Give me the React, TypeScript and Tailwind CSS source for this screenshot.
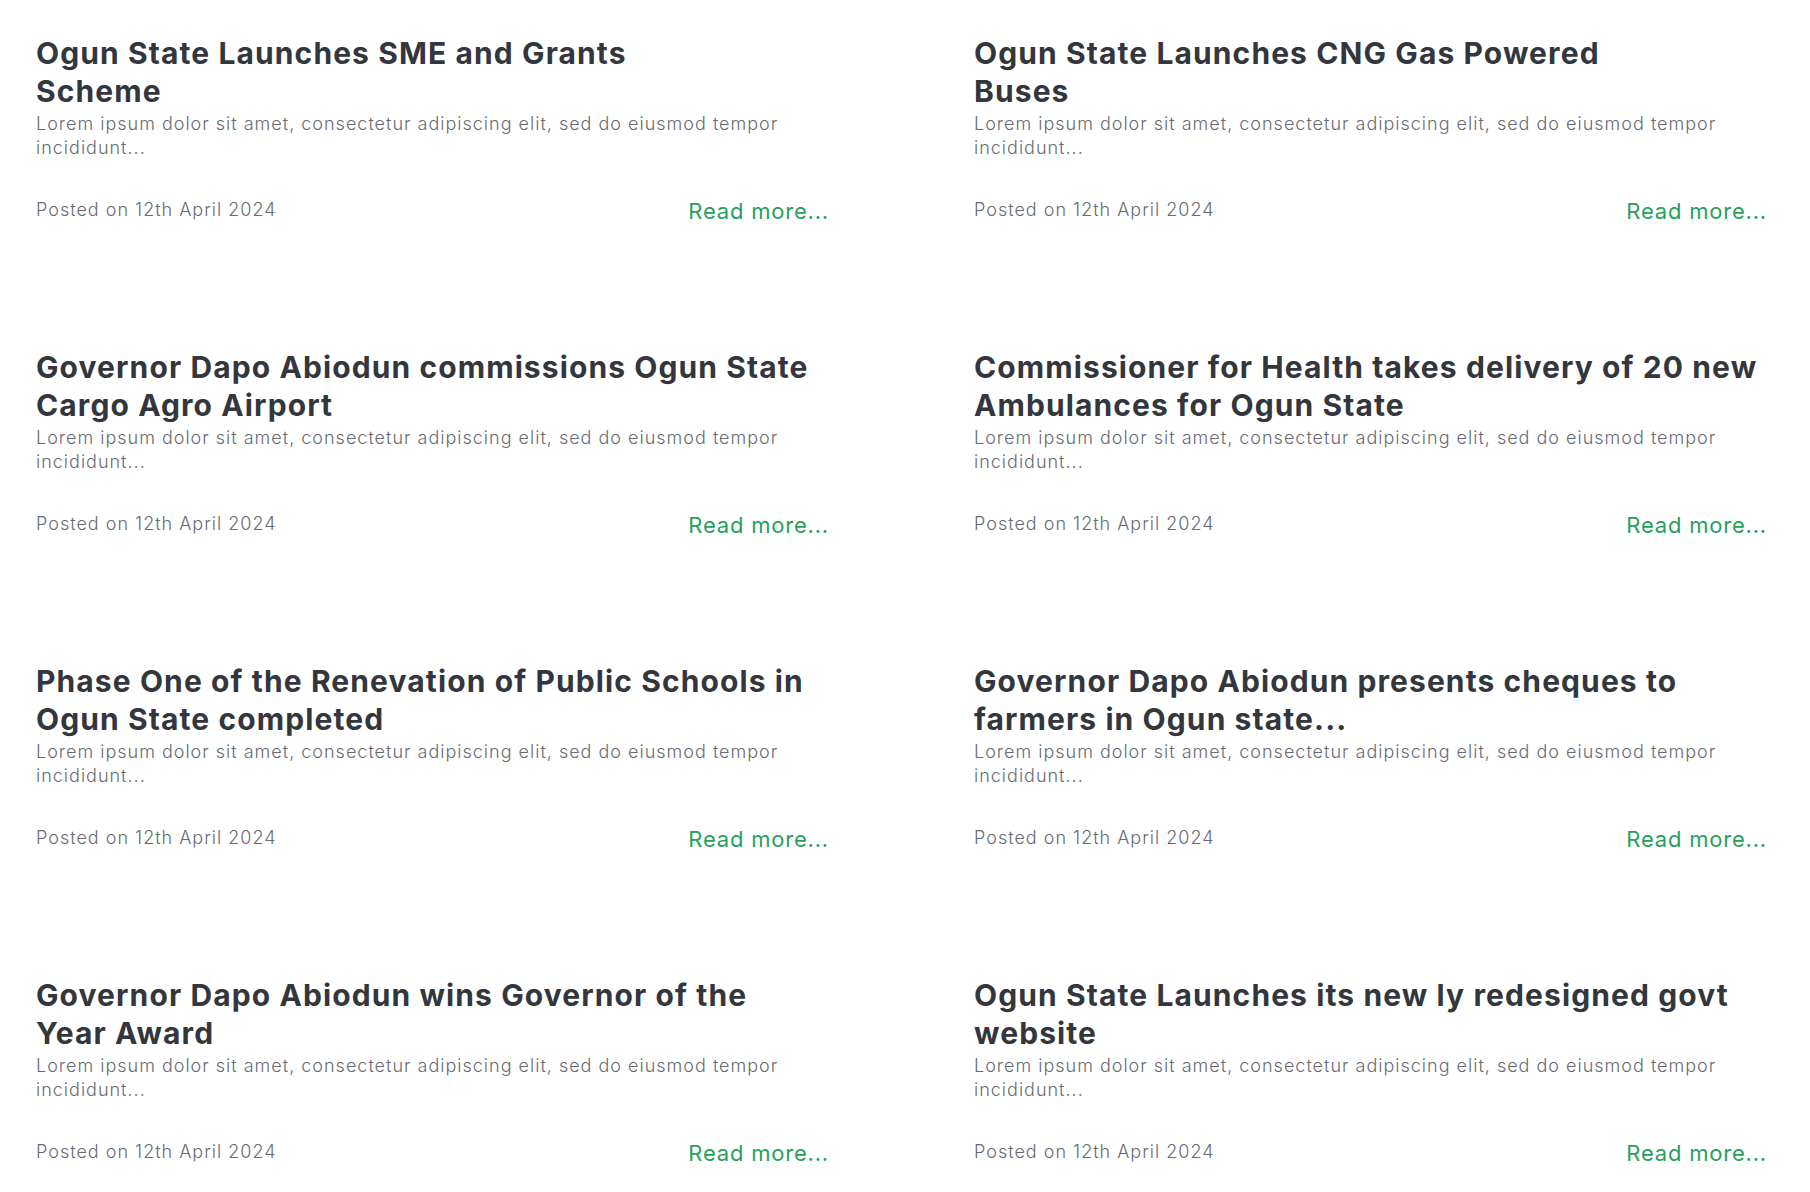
import React from "react";

type Post = { title: React.ReactNode };

const posts: Post[] = [
  { title: <>Ogun State Launches SME and Grants<br />Scheme</> },
  { title: <>Ogun State Launches CNG Gas Powered<br />Buses</> },
  { title: "Governor Dapo Abiodun commissions Ogun State Cargo Agro Airport" },
  { title: "Commissioner for Health takes delivery of 20 new Ambulances for Ogun State" },
  { title: "Phase One of the Renevation of Public Schools in Ogun State completed" },
  { title: "Governor Dapo Abiodun presents cheques to farmers in Ogun state..." },
  { title: "Governor Dapo Abiodun wins Governor of the Year Award" },
  { title: "Ogun State Launches its new ly redesigned govt website" },
];

function Card({ post }: { post: Post }) {
  return (
    <div className="flex flex-col h-[314px]">
      <h3 className="max-w-[784px] text-[30px] leading-[38px] font-bold text-[#33373d] tracking-[1.1px]">
        {post.title}
      </h3>
      <p className="mt-[2px] text-[18px] leading-[24px] font-light text-[#676c74] tracking-[1px]">
        Lorem ipsum dolor sit amet, consectetur adipiscing elit, sed do eiusmod tempor incididunt...
      </p>
      <div className="mt-[36px] flex justify-between items-start">
        <span className="text-[18px] leading-[28px] font-light text-[#676c74] tracking-[1px]">
          Posted on 12th April 2024
        </span>
        <a href="#" className="text-[22px] leading-[30px] text-[#28a05c] tracking-[0.8px]">
          Read more...
        </a>
      </div>
    </div>
  );
}

export default function App() {
  return (
    <div
      className="min-h-screen bg-white pt-[34px] pl-[36px] pr-[43px]"
      style={{ fontFamily: "Inter, 'Noto Sans', sans-serif" }}
    >
      <div className="grid grid-cols-2 gap-x-[145px]">
        {posts.map((p, i) => (
          <Card key={i} post={p} />
        ))}
      </div>
    </div>
  );
}
